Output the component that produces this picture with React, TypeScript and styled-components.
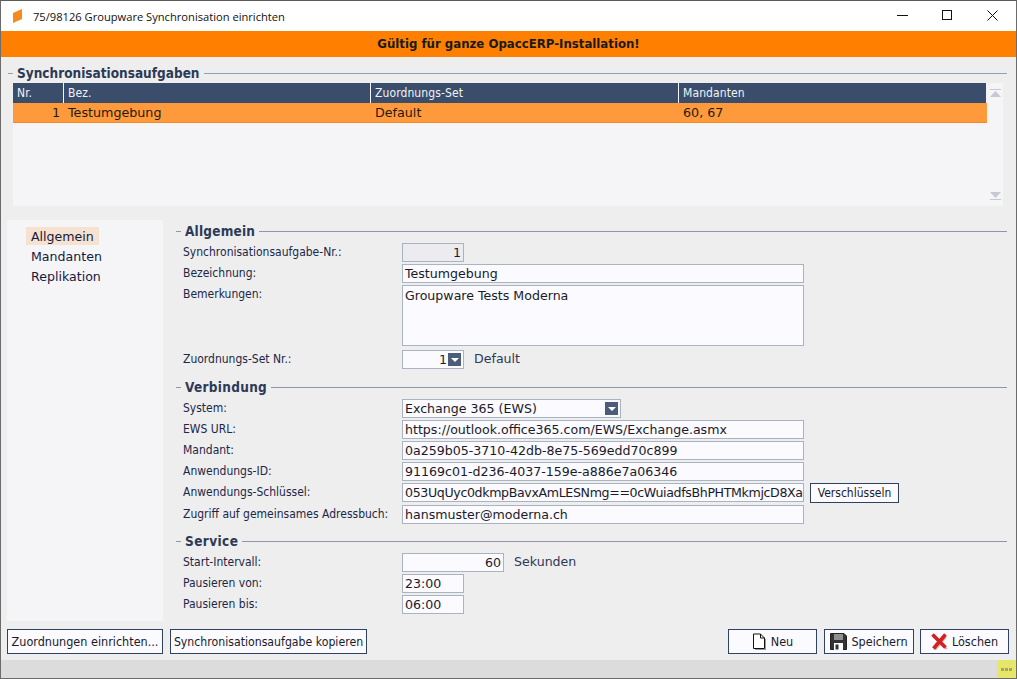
import React from "react";
import styled, { createGlobalStyle } from "styled-components";

const Global = createGlobalStyle`
  html, body { margin: 0; padding: 0; background: #eeeeee; }
  * { box-sizing: border-box; }
`;

const Win = styled.div`
  width: 1017px; height: 679px; display: flex; flex-direction: column;
  background: #eeeeee; border: 1px solid #6b6b6b; border-top: 1px solid #5a5a5a; overflow: hidden;
  font-family: "DejaVu Sans", sans-serif; color: #1c2748;
`;
const TitleBar = styled.div`
  height: 30px; flex: none; background: #fff; display: flex; align-items: center; padding: 0 1px 0 11px;
`;
const TitleText = styled.span`
  font-family: "Open Sans", "Liberation Sans", sans-serif; font-size: 11.15px; color: #111; margin-left: 9px; flex: 1;
`;
const WinBtn = styled.div`
  width: 45px; height: 28px; margin-bottom: 2px; display: flex; align-items: center; justify-content: center;
`;
const Banner = styled.div`
  height: 26px; flex: none; background: #ff8000; display: flex; align-items: center; justify-content: center;
  font-size: 11.75px; font-weight: 700; color: #1a1a1a;
`;
const Top = styled.div`
  flex: none; padding: 8px 9px 0 7px; height: 149px; display: flex; flex-direction: column;
`;
const SectionHead = styled.div`
  display: flex; align-items: center; height: 16px; gap: 4px; flex: none;
  &::before { content: ""; width: 5px; height: 1px; background: ${p => p.$line}; flex: none; }
  &::after { content: ""; flex: 1; height: 1px; background: ${p => p.$line}; }
`;
const SectionTitle = styled.span`
  font-size: 13.5px; font-weight: 700; color: #2c3a56; font-family: "DejaVu Sans Condensed", "DejaVu Sans", sans-serif;
  letter-spacing: ${p => p.$ls ?? 0}px;
`;
const TablePanel = styled.div`
  margin: 2px 4px 0 5px; background: #f5f5f8; flex: 1; display: flex;
`;
const TableArea = styled.div`
  width: 974px; flex: none;
`;
const Cols = styled.div`
  display: grid; grid-template-columns: 51px 307px 308px 308px;
`;
const Th = styled.div`
  height: 20px; background: #3a4e6b; color: #f0f3f8; font-size: 12px; padding: 3px 0 0 4px;
  border-right: 1px solid #f5f5f8; white-space: nowrap; letter-spacing: 0.1px;
  font-family: "DejaVu Sans Condensed", "DejaVu Sans", sans-serif;
  &:last-child { border-right: 0; }
`;
const Td = styled.div`
  height: 20px; background: #ff9a3c; border-bottom: 1px solid #f08a28; color: #231a10; font-size: 12.7px; padding: 2px 4px 0;
  text-align: ${p => p.$right ? "right" : "left"};
`;
const Scroll = styled.div`
  flex: 1; display: flex; flex-direction: column; justify-content: space-between; align-items: center; padding: 6px 0;
`;
const Middle = styled.div`
  flex: 1; display: flex; padding: 14px 9px 0 6px; gap: 13px; min-height: 0;
`;
const Nav = styled.div`
  width: 156px; flex: none; height: 401px; background: #f5f5f8; padding: 7px 0 0 19px; display: flex; flex-direction: column; align-items: flex-start;
`;
const NavItem = styled.div`
  padding: 0 5px; font-size: 12.6px; line-height: 19px; color: #141a40;
  background: ${p => p.$active ? "#f5e2d0" : "transparent"};
  height: ${p => p.$active ? "18px" : "20px"};
  margin-bottom: ${p => p.$active ? "2px" : "0"};
`;
const Content = styled.div`
  flex: 1; display: flex; flex-direction: column; padding-top: 3px;
`;
const Sec = styled.div`
  display: flex; flex-direction: column; margin-bottom: ${p => p.$mb ?? 10}px;
`;
const Rows = styled.div`
  display: flex; flex-direction: column; padding: 4px 0 0 7px; gap: 2px;
`;
const Row = styled.div`
  display: flex; align-items: flex-start; min-height: 19px; margin-top: ${p => p.$mt ?? 0}px;
`;
const Label = styled.div`
  width: 219px; flex: none; font-size: 12px; line-height: 18px; color: #1c2748; white-space: nowrap;
  font-family: "DejaVu Sans Condensed", "DejaVu Sans", sans-serif;
`;
const Field = styled.div`
  width: ${p => p.$w}px; height: ${p => p.$h ?? 19}px; flex: none; border: 1px solid #aab4c0;
  background: ${p => p.$bg ?? "#fafaff"}; font-size: 12.6px; line-height: 17px; padding: ${p => p.$pt ?? 0}px 2px 0; color: #1a1a2a; white-space: nowrap; overflow: hidden;
  letter-spacing: ${p => p.$ls ?? 0}px; display: flex; align-items: flex-start;
  justify-content: ${p => p.$right ? "flex-end" : "flex-start"};
`;
const Arrow = styled.span`
  width: 13px; height: 13px; background: #4c5d79; display: flex; align-items: center; justify-content: center; flex: none; margin: 2px 0 0 1px;
  &::after { content: ""; border-left: 4px solid transparent; border-right: 4px solid transparent; border-top: 4px solid #fff; }
`;
const FieldSpacer = styled.span` flex: 1; `;
const After = styled.span`
  font-size: 12.6px; margin-left: ${p => p.$ml}px; color: #2c3a56; line-height: 17px;
`;
const Footer = styled.div`
  height: 39px; flex: none; padding: 8px 7px 0 6px; display: flex; gap: 4px; align-items: flex-start;
`;
const Btn = styled.button`
  height: ${p => p.$h ?? 25}px; width: ${p => p.$w}px; background: #fafaff; border: 1px solid #2f4263; font-family: "DejaVu Sans Condensed", "DejaVu Sans", sans-serif;
  font-size: ${p => p.$fs ?? 12.5}px; color: #1a1a2a; padding: 0; display: flex; align-items: center; justify-content: center; gap: 4px; flex: none;
  margin-left: ${p => p.$ml ?? 0}px; white-space: nowrap;
`;
const Grow = styled.div` flex: 1; `;
const Status = styled.div`
  height: 18px; flex: none; background: #dcdcdc; display: flex; justify-content: flex-end; padding-right: 1px;
`;
const Grip = styled.div`
  width: 18px; height: 18px; background: #e6e66a; display: flex; align-items: center; justify-content: center; gap: 1px;
  & > i { width: 3px; height: 3px; background: #a3a36a; display: block; }
`;

const File = () => (
  <svg width="15" height="17" viewBox="0 0 15 17"><path d="M3 16.5H14M13.5 6V16" stroke="#9a9a9a" strokeWidth="1"/><path d="M1.5 1 H8.5 L12.5 5 V15.5 H1.5Z M8.5 1 V5 H12.5" fill="#fff" stroke="#111" strokeWidth="1"/></svg>
);
const Disk = () => (
  <svg width="17" height="17" viewBox="0 0 17 17"><path d="M0.5 0.5H14L16.5 3V16.5H0.5Z" fill="#333" stroke="#222"/><rect x="4" y="1" width="9" height="6" fill="#8f8f8f"/><rect x="4" y="10" width="9" height="7" fill="#fff"/><rect x="5.5" y="11.5" width="3" height="5" fill="#333"/></svg>
);
const Del = () => (
  <svg width="17" height="17" viewBox="0 0 17 17"><path d="M3 4L16 16M15 4L4 17" stroke="#bbb" strokeWidth="2"/><path d="M1.5 1.5L14.5 14.5M14.5 1.5L2.5 15.5" stroke="#d61f1f" strokeWidth="3.6"/></svg>
);
const Up = () => <svg width="11" height="9" viewBox="0 0 11 9"><path d="M0 0H11V1H0Z M5.5 2L11 8H0Z" fill="#c5cad2"/></svg>;
const Down = () => <svg width="11" height="9" viewBox="0 0 11 9"><path d="M0 8H11V9H0Z M5.5 7L0 1H11Z" fill="#c5cad2"/></svg>;

export default function App() {
  const line = "#8ea0bc";
  const sub = "#8d97a6";
  return (
    <Win>
      <Global />
      <TitleBar>
        <svg width="12" height="16" viewBox="0 0 12 16"><path d="M1 5L10 1V11L1 15Z" fill="#f58a1f"/></svg>
        <TitleText>75/98126 Groupware Synchronisation einrichten</TitleText>
        <WinBtn><svg width="11" height="11" viewBox="0 0 11 11"><path d="M0 5.5H11" stroke="#111"/></svg></WinBtn>
        <WinBtn><svg width="11" height="11" viewBox="0 0 11 11"><rect x="0.5" y="0.5" width="9" height="9" fill="none" stroke="#111"/></svg></WinBtn>
        <WinBtn><svg width="11" height="11" viewBox="0 0 11 11"><path d="M0.5 0.5L10.5 10.5M10.5 0.5L0.5 10.5" stroke="#111"/></svg></WinBtn>
      </TitleBar>
      <Banner>Gültig für ganze OpaccERP-Installation!</Banner>
      <Top>
        <SectionHead $line={line}><SectionTitle>Synchronisationsaufgaben</SectionTitle></SectionHead>
        <TablePanel>
          <TableArea>
            <Cols>
              <Th>Nr.</Th><Th>Bez.</Th><Th>Zuordnungs-Set</Th><Th>Mandanten</Th>
              <Td $right>1</Td><Td>Testumgebung</Td><Td>Default</Td><Td>60, 67</Td>
            </Cols>
          </TableArea>
          <Scroll><Up /><Down /></Scroll>
        </TablePanel>
      </Top>
      <Middle>
        <Nav>
          <NavItem $active>Allgemein</NavItem>
          <NavItem>Mandanten</NavItem>
          <NavItem>Replikation</NavItem>
        </Nav>
        <Content>
          <Sec>
            <SectionHead $line={sub}><SectionTitle $ls={0.2}>Allgemein</SectionTitle></SectionHead>
            <Rows>
              <Row><Label>Synchronisationsaufgabe-Nr.:</Label><Field $w={62} $right $bg="#ececf0">1</Field></Row>
              <Row><Label>Bezeichnung:</Label><Field $w={402}>Testumgebung</Field></Row>
              <Row><Label>Bemerkungen:</Label><Field $w={402} $h={61} $pt={1}>Groupware Tests Moderna</Field></Row>
              <Row $mt={2}><Label>Zuordnungs-Set Nr.:</Label><Field $w={62} $right>1<Arrow /></Field><After $ml={10}>Default</After></Row>
            </Rows>
          </Sec>
          <Sec $mb={9}>
            <SectionHead $line={sub}><SectionTitle $ls={0.3}>Verbindung</SectionTitle></SectionHead>
            <Rows>
              <Row><Label>System:</Label><Field $w={219}>Exchange 365 (EWS)<FieldSpacer /><Arrow /></Field></Row>
              <Row><Label>EWS URL:</Label><Field $w={402}>https://outlook.office365.com/EWS/Exchange.asmx</Field></Row>
              <Row><Label>Mandant:</Label><Field $w={402}>0a259b05-3710-42db-8e75-569edd70c899</Field></Row>
              <Row><Label>Anwendungs-ID:</Label><Field $w={402}>91169c01-d236-4037-159e-a886e7a06346</Field></Row>
              <Row><Label>Anwendungs-Schlüssel:</Label><Field $w={402} $ls={-0.36}>053UqUyc0dkmpBavxAmLESNmg==0cWuiadfsBhPHTMkmjcD8Xa</Field><Btn $w={89} $h={20} $fs={12} $ml={6}>Verschlüsseln</Btn></Row>
              <Row><Label>Zugriff auf gemeinsames Adressbuch:</Label><Field $w={402}>hansmuster@moderna.ch</Field></Row>
            </Rows>
          </Sec>
          <Sec>
            <SectionHead $line={sub}><SectionTitle $ls={0.4}>Service</SectionTitle></SectionHead>
            <Rows>
              <Row><Label>Start-Intervall:</Label><Field $w={102} $right>60</Field><After $ml={10}>Sekunden</After></Row>
              <Row><Label>Pausieren von:</Label><Field $w={62}>23:00</Field></Row>
              <Row><Label>Pausieren bis:</Label><Field $w={62}>06:00</Field></Row>
            </Rows>
          </Sec>
        </Content>
      </Middle>
      <Footer>
        <Btn $w={156}>Zuordnungen einrichten...</Btn>
        <Btn $w={197} $fs={12.2} $ml={3}>Synchronisationsaufgabe kopieren</Btn>
        <Grow />
        <Btn $w={89}><File />Neu</Btn>
        <Btn $w={90} $ml={3}><Disk />Speichern</Btn>
        <Btn $w={89} $ml={2}><Del />Löschen</Btn>
      </Footer>
      <Status><Grip><i /><i /><i /></Grip></Status>
    </Win>
  );
}
